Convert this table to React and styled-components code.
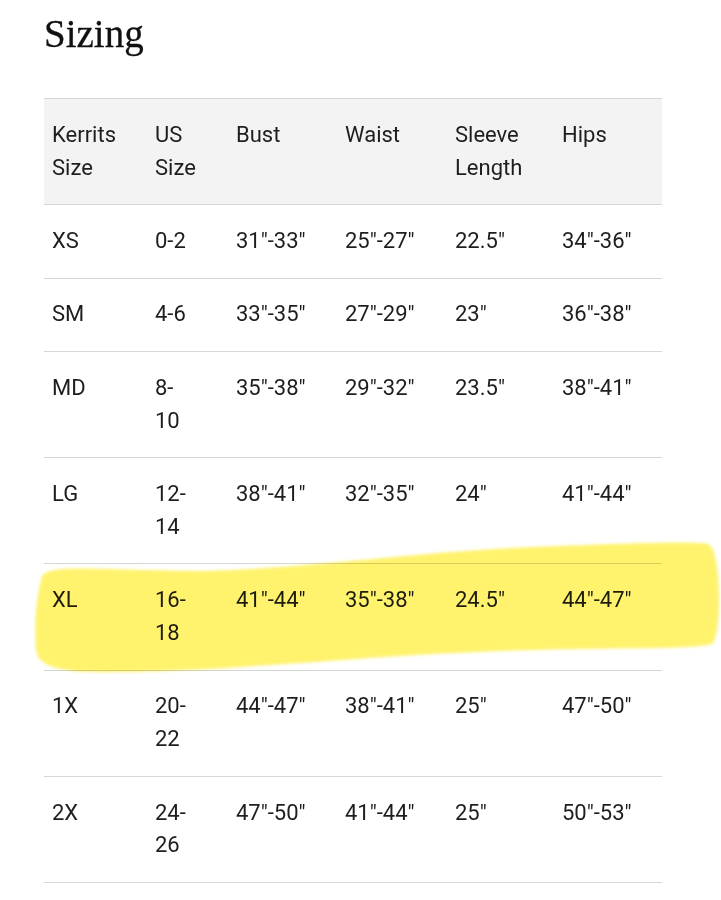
import React from "react";
import styled, { createGlobalStyle } from "styled-components";

const Global = createGlobalStyle`
  html, body { margin: 0; padding: 0; background: #ffffff; }
  body { font-family: Roboto, "Liberation Sans", Arial, sans-serif; }
`;

const Page = styled.div`
  position: relative;
  width: 721px;
  min-height: 900px;
  padding: 14px 0 0 44px;
  box-sizing: border-box;
  overflow: hidden;
`;

const Title = styled.h2`
  margin: 0 0 45px 0;
  font-family: "Liberation Serif", "Times New Roman", serif;
  font-weight: 400;
  font-size: 39px;
  line-height: 1;
  color: #111111;
  -webkit-text-stroke: 0.3px #111111;
`;

const Table = styled.table`
  width: 618px;
  border-collapse: collapse;
  table-layout: fixed;
  border-top: 1px solid #d6d6d6;
  font-size: 22px;
  line-height: 32.8px;
  color: #1e1e1e;
`;

const Col = styled.col`
  width: ${(p) => p.$w}px;
`;

const HeadRow = styled.tr`
  background: #f3f3f3;
  border-bottom: 1px solid #d6d6d6;
`;

const Row = styled.tr`
  border-bottom: 1px solid #d6d6d6;
`;

const HeadCell = styled.th`
  text-align: left;
  vertical-align: top;
  font-weight: 400;
  padding: 19.8px ${(p) => (p.$narrow ? 35 : 8)}px 19.8px 8px;
`;

const Cell = styled.td`
  text-align: left;
  vertical-align: top;
  padding: 19.8px ${(p) => (p.$narrow ? 35 : 8)}px 19.8px 8px;
  white-space: ${(p) => (p.$narrow ? "normal" : "nowrap")};
`;

const Highlight = styled.svg`
  position: absolute;
  left: 0;
  top: 0;
  width: 721px;
  height: 900px;
  pointer-events: none;
  mix-blend-mode: multiply;
`;

const widths = [103, 81, 109, 110, 107, 108];
const headers = ["Kerrits Size", "US Size", "Bust", "Waist", "Sleeve Length", "Hips"];
const rows = [
  ["XS", "0-2", '31"-33"', '25"-27"', '22.5"', '34"-36"'],
  ["SM", "4-6", '33"-35"', '27"-29"', '23"', '36"-38"'],
  ["MD", "8-10", '35"-38"', '29"-32"', '23.5"', '38"-41"'],
  ["LG", "12-14", '38"-41"', '32"-35"', '24"', '41"-44"'],
  ["XL", "16-18", '41"-44"', '35"-38"', '24.5"', '44"-47"'],
  ["1X", "20-22", '44"-47"', '38"-41"', '25"', '47"-50"'],
  ["2X", "24-26", '47"-50"', '41"-44"', '25"', '50"-53"'],
];

export default function App() {
  return (
    <>
      <Global />
      <Page>
        <Title>Sizing</Title>
        <Table>
          <colgroup>
            {widths.map((w, i) => (
              <Col key={i} $w={w} />
            ))}
          </colgroup>
          <thead>
            <HeadRow>
              {headers.map((h, i) => (
                <HeadCell key={h} $narrow={i === 1}>
                  {h}
                </HeadCell>
              ))}
            </HeadRow>
          </thead>
          <tbody>
            {rows.map((r) => (
              <Row key={r[0]}>
                {r.map((c, i) => (
                  <Cell key={i} $narrow={i === 1}>
                    {c}
                  </Cell>
                ))}
              </Row>
            ))}
          </tbody>
        </Table>
        <Highlight viewBox="0 0 721 900" aria-hidden="true">
          <defs>
            <filter id="soft" x="-5%" y="-20%" width="110%" height="140%">
              <feGaussianBlur stdDeviation="1.8" />
            </filter>
          </defs>
          <path
            filter="url(#soft)"
            fill="#fff36e"
            d="M 42 576 C 52 564, 90 570, 200 571 C 320 568, 420 550, 560 546 C 640 543, 690 541, 708 544 C 722 548, 722 636, 712 644 C 690 650, 620 647, 500 651 C 360 656, 250 670, 120 672 C 70 673, 38 670, 36 650 C 34 625, 36 598, 42 576 Z"
          />
        </Highlight>
      </Page>
    </>
  );
}
